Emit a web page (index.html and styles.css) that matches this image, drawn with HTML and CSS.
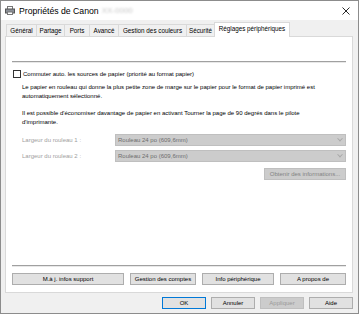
FILE: index.html
```html
<!DOCTYPE html>
<html lang="fr">
<head>
  <meta charset="UTF-8">
  <title>Propriétés de Canon</title>
  <link rel="stylesheet" href="styles.css">
</head>
<body>
  <div class="window">

    <!-- TITLE BAR -->
    <div class="titlebar">
      <svg class="printer" width="10" height="9" viewBox="0 0 10 9">
        <rect x="2.5" y="0.5" width="5" height="3" fill="#fff" stroke="#777"/>
        <rect x="0.5" y="3" width="9" height="4" fill="#8a8f96" stroke="#555"/>
        <rect x="2.5" y="6" width="5" height="2.5" fill="#fff" stroke="#777"/>
      </svg>
      <span class="title">Propriétés de Canon</span>
      <span class="model">XX-0000</span>
      <svg class="close" width="8" height="8" viewBox="0 0 8 8">
        <path d="M0.5 0.5 L7.5 7.5 M7.5 0.5 L0.5 7.5" stroke="#111" stroke-width="0.9"/>
      </svg>
    </div>

    <!-- TABS -->
    <div class="tabs">
      <div class="tab t-general">Général</div>
      <div class="tab t-partage">Partage</div>
      <div class="tab t-ports">Ports</div>
      <div class="tab t-avance">Avancé</div>
      <div class="tab t-couleurs">Gestion des couleurs</div>
      <div class="tab t-securite">Sécurité</div>
      <div class="tab t-reglages active">Réglages périphériques</div>
    </div>

    <!-- PANEL -->
    <div class="panel">
      <div class="sep top-sep"></div>

      <label class="check-row">
        <span class="checkbox"></span>
        Commuter auto. les sources de papier (priorité au format papier)
      </label>

      <p class="info">Le papier en rouleau qui donne la plus petite zone de marge sur le papier pour le format de papier imprimé est automatiquement sélectionné.</p>
      <p class="info second">Il est possible d'économiser davantage de papier en activant Tourner la page de 90 degrés dans le pilote d'imprimante.</p>

      <div class="field first">
        <span class="field-label">Largeur du rouleau 1 :</span>
        <div class="select">Rouleau 24 po (609,6mm)<span class="chev"></span></div>
      </div>
      <div class="field">
        <span class="field-label">Largeur du rouleau 2 :</span>
        <div class="select">Rouleau 24 po (609,6mm)<span class="chev"></span></div>
      </div>
      <div class="get-info">
        <div class="btn disabled wide">Obtenir des informations...</div>
      </div>

      <div class="spacer"></div>

      <div class="sep"></div>
      <div class="panel-buttons">
        <div class="btn b-support">M.à j. infos support</div>
        <div class="btn b-comptes">Gestion des comptes</div>
        <div class="btn b-info">Info périphérique</div>
        <div class="btn b-apropos">A propos de</div>
      </div>
    </div>

    <!-- DIALOG BUTTONS -->
    <div class="dialog-buttons">
      <div class="btn dlg default">OK</div>
      <div class="btn dlg">Annuler</div>
      <div class="btn dlg disabled">Appliquer</div>
      <div class="btn dlg">Aide</div>
    </div>

  </div>
</body>
</html>
```

FILE: styles.css
```css
* { box-sizing: border-box; }

body {
  margin: 0;
  font-family: "Liberation Sans", Arial, sans-serif;
  font-size: 6px;
  color: #000;
}

.window {
  width: 359px;
  height: 314px;
  border: 1px solid #8c8c8c;
  background: #f0f0f0;
  display: flex;
  flex-direction: column;
}

/* title bar */
.titlebar {
  height: 19px;
  background: #fff;
  display: flex;
  align-items: center;
  padding-left: 4px;
}
  .printer { margin-right: 4px; }
  .title { font-size: 8.7px; }
  .model {
    font-size: 8px;
    margin-left: 3px;
    color: #c8c8c8;
    filter: blur(1.2px);
  }
  .close { margin-left: auto; margin-right: 8px; }

/* tabs */
.tabs {
  display: flex;
  align-items: flex-end;
  margin: 3px 0 0 5px;
  height: 13px;
  position: relative;
  z-index: 1;
}
  .tab {
    height: 12px;
    line-height: 11px;
    text-align: center;
    font-size: 6.3px;
    border: 1px solid #d9d9d9;
    border-bottom: none;
    border-right: none;
    background: #f0f0f0;
    white-space: nowrap;
  }
  .t-general { width: 30px; }
  .t-partage { width: 28px; }
  .t-ports { width: 25px; }
  .t-avance { width: 29px; }
  .t-couleurs { width: 68px; }
  .t-securite { width: 28px; }
  .t-reglages { width: 76px; }
  .tab.active {
    height: 15px;
    line-height: 12px;
    margin-bottom: -1px;
    border-right: 1px solid #d9d9d9;
    background: #fff;
  }

/* panel */
.panel {
  margin: 0 5px 0 4px;
  height: 257px;
  background: #fff;
  border: 1px solid #d9d9d9;
  padding: 0 6px 0 6px;
  display: flex;
  flex-direction: column;
}
  .sep {
    background: #a0a0a0;
    border-bottom: 1px solid #e8e8e8;
    height: 2px;
  }
  .top-sep { margin-top: 24px; }

  .check-row {
    display: flex;
    align-items: center;
    margin-top: 7px;
  }
    .checkbox {
      width: 8px;
      height: 8px;
      border: 1px solid #333;
      background: #fff;
      margin-left: 1px;
      margin-right: 2px;
    }

  .info {
    margin: 5px 0 0 10px;
    line-height: 9px;
    padding-right: 10px;
  }
  .info.second { margin-top: 8px; }

  .field {
    display: flex;
    align-items: center;
    margin-top: 4px;
    padding-left: 10px;
  }
  .field.first { margin-top: 7px; }
    .field-label {
      width: 93px;
      color: #a0a0a0;
    }
    .select {
      flex: 1;
      height: 12px;
      line-height: 10px;
      background: #cccccc;
      border: 1px solid #bfbfbf;
      color: #6d6d6d;
      padding-left: 2px;
      display: flex;
      align-items: center;
    }
    .chev {
      margin-left: auto;
      margin-right: 3px;
      width: 4px;
      height: 4px;
      border-right: 1px solid #a8a8a8;
      border-bottom: 1px solid #a8a8a8;
      transform: rotate(45deg) translate(-1px, -1px);
    }

  .get-info {
    display: flex;
    justify-content: flex-end;
    margin-top: 6px;
  }

  .spacer { flex: 1; }

  .panel-buttons {
    display: flex;
    justify-content: space-between;
    margin: 6px 0 7px 0;
  }

/* buttons */
.btn {
  height: 12px;
  line-height: 10px;
  text-align: center;
  background: #e1e1e1;
  border: 1px solid #adadad;
  white-space: nowrap;
}
.btn.disabled {
  background: #cccccc;
  border-color: #bfbfbf;
  color: #9a9a9a;
}
.btn.wide { width: 82px; color: #838383; }
.b-support { width: 112px; }
.b-comptes { width: 66px; }
.b-info { width: 72px; }
.b-apropos { width: 66px; }

.dialog-buttons {
  display: flex;
  justify-content: flex-end;
  gap: 5px;
  margin-top: 4px;
  padding-right: 5px;
}
  .btn.dlg { width: 44px; }
  .btn.default { border-color: #0078d7; }
```
